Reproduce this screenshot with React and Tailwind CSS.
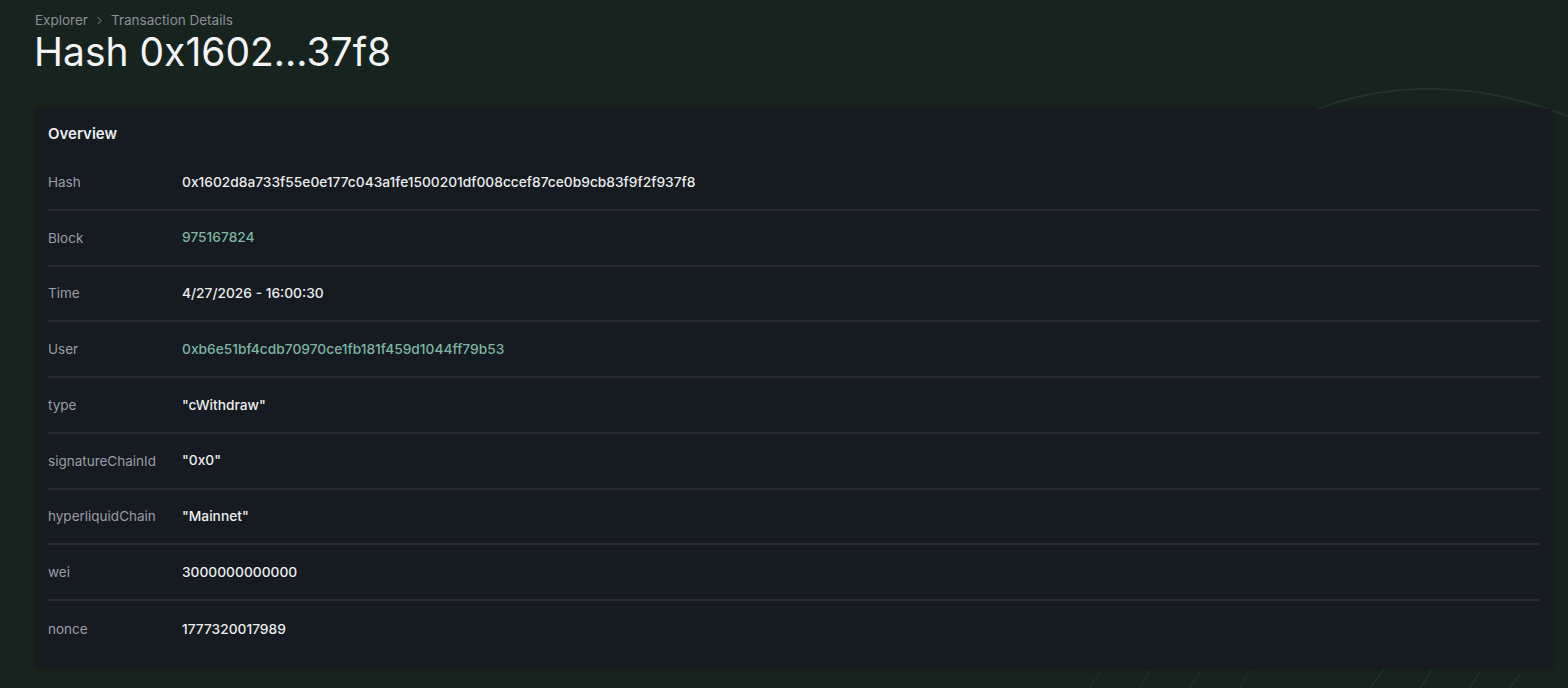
import { ChevronRight } from "lucide-react";

const rows = [
    { label: "Hash", value: "0x1602d8a733f55e0e177c043a1fe1500201df008ccef87ce0b9cb83f9f2f937f8" },
    { label: "Block", value: "975167824", link: true },
    { label: "Time", value: "4/27/2026 - 16:00:30" },
    { label: "User", value: "0xb6e51bf4cdb70970ce1fb181f459d1044ff79b53", link: true },
    { label: "type", value: "\"cWithdraw\"" },
    { label: "signatureChainId", value: "\"0x0\"" },
    { label: "hyperliquidChain", value: "\"Mainnet\"" },
    { label: "wei", value: "3000000000000" },
    { label: "nonce", value: "1777320017989" },
];

function BackdropLines() {
    // faint curves in the page background
    return (
        <svg className="absolute inset-0 w-full h-full pointer-events-none" viewBox="0 0 1568 688" preserveAspectRatio="none">
            <path d="M1315 110 C1390 80 1480 82 1568 116" fill="none" stroke="#22322c" strokeWidth="2" />
            <path d="M1370 688 L1385 668 M1420 688 L1432 670 M1470 688 L1480 672 M1510 688 L1520 674" stroke="#1f2f29" strokeWidth="1.5" />
            <path d="M1090 688 L1100 672 M1140 688 L1150 670 M1190 688 L1200 672 M1240 688 L1250 670" stroke="#1e2d28" strokeWidth="1.5" />
        </svg>
    );
}

export default function App() {
    return (
        <div className="relative min-h-[688px] w-full bg-[#17231f] overflow-hidden" style={{ fontFamily: "Inter, 'Liberation Sans', sans-serif" }}>
            <BackdropLines />
            <div className="relative px-[35px] pt-[11px]">
                <div className="flex items-center gap-[5px] text-[13.5px] leading-[18px] text-[#8a9094]">
                    <span>Explorer</span>
                    <ChevronRight size={13} strokeWidth={1.75} />
                    <span>Transaction Details</span>
                </div>
                <h1 className="text-[39px] leading-[44px] text-[#f3f4f4] mt-[1px] -ml-[1px]">Hash 0x1602...37f8</h1>

                <div className="mt-[35px] ml-[2px] w-[1515px] rounded-[3px] bg-[#161a21] shadow-[0_0_6px_rgba(0,0,0,0.4)] pl-[11px] pr-[12px] pb-[10px]">
                    <div className="pt-[15px] pb-[11px] text-[15px] leading-[20px] font-semibold text-[#eceeee]">Overview</div>
                    {rows.map((row, i) => (
                        <div
                            key={row.label}
                            className={`flex items-center h-[55.75px] ${i < rows.length - 1 ? "border-b-2 border-[#272b31]" : ""}`}
                        >
                            <div className="w-[134px] text-[13.5px] text-[#9a9ea3]">{row.label}</div>
                            <div className={`text-[13.75px] font-medium ${row.link ? "text-[#7db5a0]" : "text-[#eceeee]"}`}>{row.value}</div>
                        </div>
                    ))}
                </div>
            </div>
        </div>
    );
}
